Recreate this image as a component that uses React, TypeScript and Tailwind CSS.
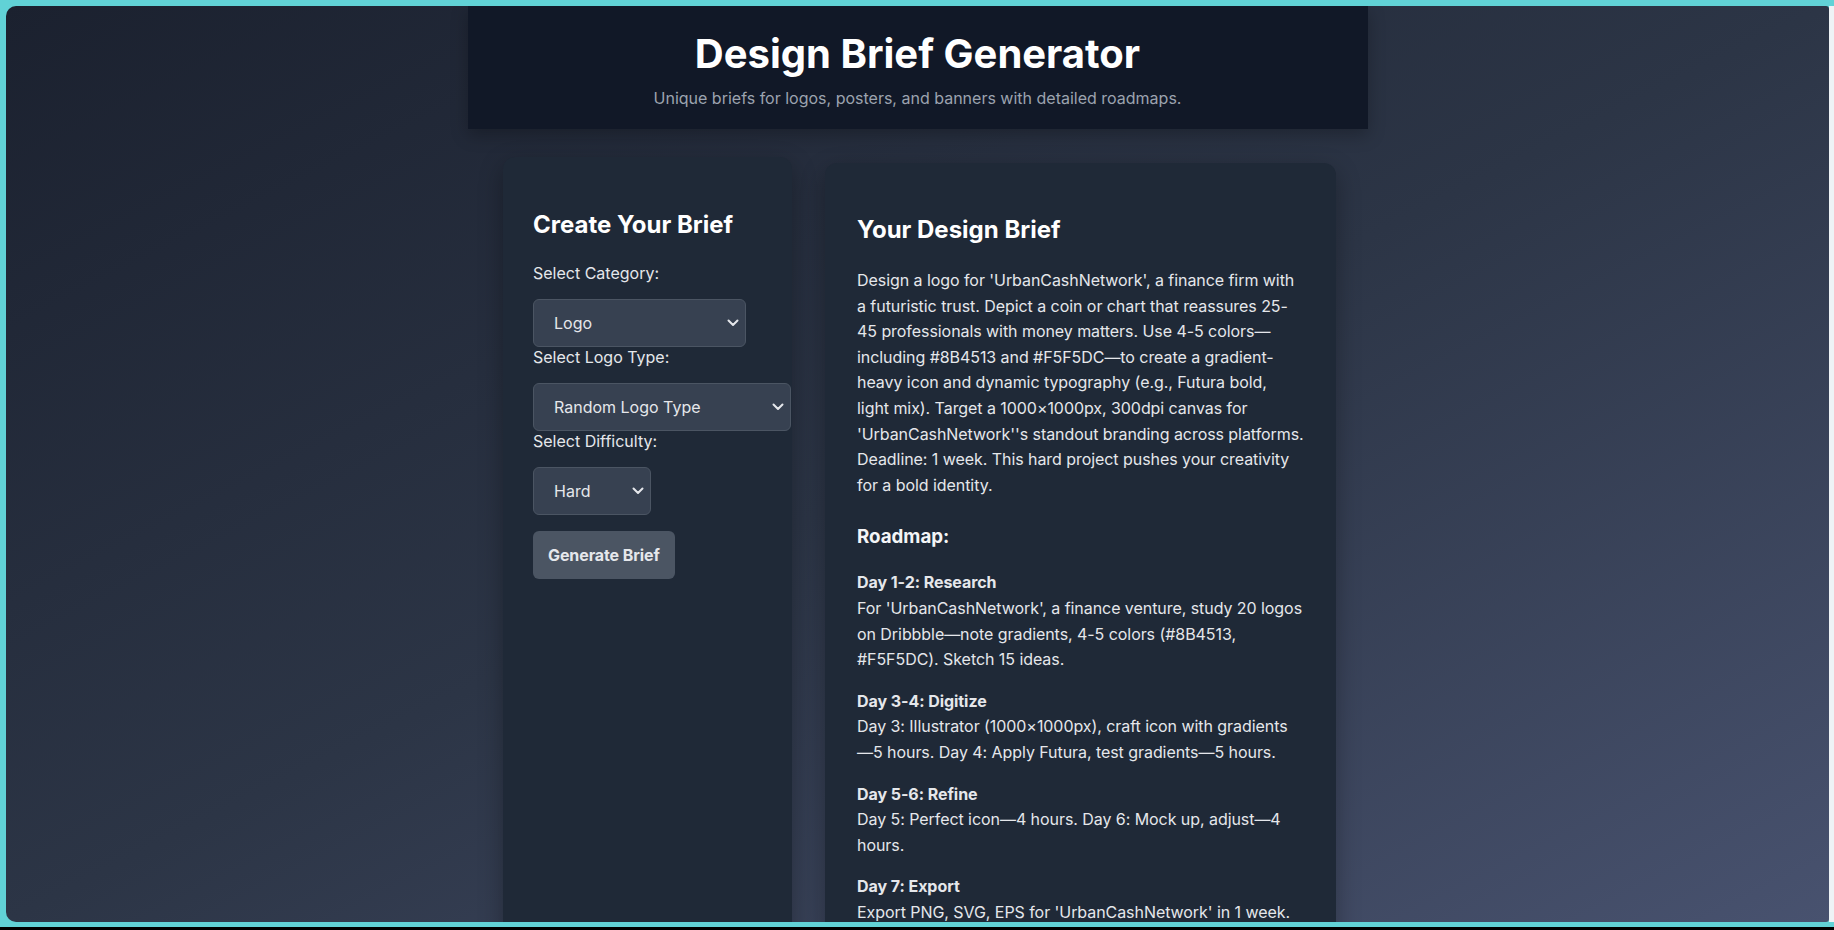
import React from 'react';

type Field = {
  label: string;
  value: string;
  options: string[];
  width: string;
};

const fields: Field[] = [
  { label: 'Select Category:', value: 'Logo', options: ['Logo', 'Poster', 'Banner'], width: 'w-[213px]' },
  {
    label: 'Select Logo Type:',
    value: 'Random Logo Type',
    options: ['Random Logo Type', 'Wordmark', 'Lettermark', 'Emblem', 'Mascot'],
    width: 'w-[258px]',
  },
  { label: 'Select Difficulty:', value: 'Hard', options: ['Easy', 'Medium', 'Hard'], width: 'w-[118px]' },
];

// \u2060 (word joiner) and \u00a0 keep a few line breaks where the original wraps
const roadmap = [
  {
    title: 'Day 1-2: Research',
    text: "For 'UrbanCashNetwork', a finance venture, study 20 logos on Dribbble—note gradients, 4-5 colors (#8B4513, #F5F5DC). Sketch 15 ideas.",
  },
  {
    title: 'Day 3-4: Digitize',
    text: 'Day 3: Illustrator (1000×1000px), craft icon with gradients—\u20605 hours. Day 4: Apply Futura, test gradients—5 hours.',
  },
  {
    title: 'Day 5-6: Refine',
    text: 'Day 5: Perfect icon—4 hours. Day 6: Mock up, adjust—4 hours.',
  },
  {
    title: 'Day 7: Export',
    text: "Export PNG, SVG, EPS for 'UrbanCashNetwork' in 1 week.",
  },
];

const brief =
  "Design a logo for 'UrbanCashNetwork', a finance firm with a futuristic trust. Depict a coin or chart that reassures 25-45 professionals with money matters. Use 4-5 colors—including #8B4513 and #F5F5DC—to create a gradient-heavy icon and dynamic typography (e.g., Futura bold, light\u00a0mix). Target a 1000×1000px, 300dpi canvas for 'UrbanCashNetwork''s standout branding across platforms. Deadline: 1 week. This hard project pushes your creativity for a bold identity.";

const Chevron: React.FC = () => (
  <svg
    className="pointer-events-none absolute right-[7px] top-1/2 -translate-y-1/2"
    width="12"
    height="8"
    viewBox="0 0 12 8"
    fill="none"
  >
    <polyline points="1.5,1.5 6,6 10.5,1.5" stroke="#e5e7eb" strokeWidth="2" strokeLinecap="round" strokeLinejoin="round" />
  </svg>
);

const App: React.FC = () => {
  return (
    <div className="h-[930px] w-full overflow-hidden border-b-[3px] border-black bg-[#61d2d6] pb-[5px] pl-[6px] pt-[6px] font-[Inter,sans-serif]">
      <div className="flex h-full">
        <div className="relative flex-1 overflow-hidden rounded-l-[10px] rounded-r-[3px] bg-linear-to-br from-[#1b212f] via-[#2c3546] to-[#48526f]">
          <header className="mx-auto w-[900px] bg-[#111827] pb-[21px] pt-6 text-center shadow-[0_6px_16px_rgba(0,0,0,0.25)]">
            <h1 className="text-[40px] font-bold leading-[48px] text-white">Design Brief Generator</h1>
            <p className="mt-[11px] text-base leading-[19px] text-[#9ca3af]">
              Unique briefs for logos, posters, and banners with detailed roadmaps.
            </p>
          </header>

          <div className="mt-[34px] flex justify-center gap-[33px] pl-[4px]">
            <div className="w-[289px] -translate-y-[6px] rounded-xl bg-[#1f2937] px-[30px] pt-[53px] shadow-[0_8px_24px_rgba(0,0,0,0.3)]">
              <h2 className="mb-6 text-2xl font-bold leading-[29px] text-white">Create Your Brief</h2>
              {fields.map((f) => (
                <div key={f.label}>
                  <label className="mb-4 block text-base leading-5 text-[#e5e7eb]">{f.label}</label>
                  <div className={`relative h-12 ${f.width}`}>
                    <select
                      defaultValue={f.value}
                      className="h-full w-full appearance-none rounded-md border border-[#4b5563] bg-[#374151] pl-5 pr-8 text-base text-[#e5e7eb] outline-none"
                    >
                      {f.options.map((o) => (
                        <option key={o}>{o}</option>
                      ))}
                    </select>
                    <Chevron />
                  </div>
                </div>
              ))}
              <button className="mt-4 h-12 rounded-md bg-[#4b5563] px-[15px] text-base font-bold tracking-[-0.1px] text-[#e5e7eb]">
                Generate Brief
              </button>
            </div>

            <div className="w-[511px] rounded-xl bg-[#1f2937] pb-16 pl-8 pr-[31px] pt-[52px] tracking-[-0.06px] shadow-[0_8px_24px_rgba(0,0,0,0.3)]">
              <h2 className="mb-[24px] text-2xl font-bold leading-[29px] tracking-normal text-white">Your Design Brief</h2>
              <p className="text-base leading-[25.6px] text-[#e5e7eb]">{brief}</p>
              <h3 className="mb-[22px] mt-[27px] text-[18.72px] font-bold leading-[23px] tracking-normal text-[#f3f4f6]">
                Roadmap:
              </h3>
              {roadmap.map((d) => (
                <p key={d.title} className="mb-4 text-base leading-[25.6px] text-[#e5e7eb]">
                  <strong className="font-bold">{d.title}</strong>
                  <br />
                  {d.text}
                </p>
              ))}
            </div>
          </div>
        </div>
        <div className="w-[5px] bg-[#eef3f6]" />
      </div>
    </div>
  );
};

export default App;
